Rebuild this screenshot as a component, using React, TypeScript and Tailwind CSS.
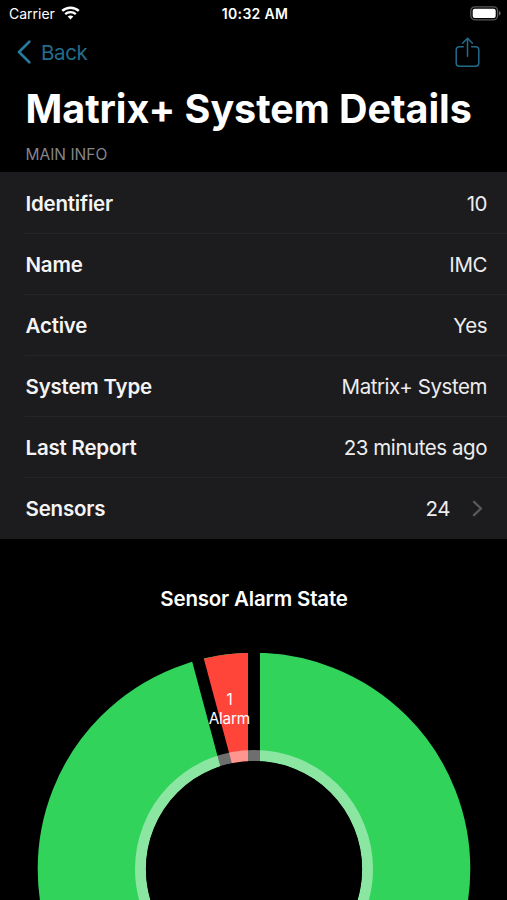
import React from "react";

const rows = [
  { label: "Identifier", value: "10" },
  { label: "Name", value: "IMC" },
  { label: "Active", value: "Yes" },
  { label: "System Type", value: "Matrix+ System" },
  { label: "Last Report", value: "23 minutes ago" },
  { label: "Sensors", value: "24", link: true },
];

function StatusBar() {
  return (
    <div className="grid h-7 grid-cols-3 items-center pr-[6px] pb-px pl-[9px] text-[14px]">
      <div className="flex items-center gap-[6px]">
        <span>Carrier</span>
        <svg className="mb-[2px]" width="19" height="14" viewBox="0 0 19 14" fill="none" stroke="white">
          <path d="M1.200 4.900C5.800.6 13.200.6 17.800 4.900" strokeWidth="2.500" />
          <path d="M4.200 8.100C7.100 5.400 11.900 5.400 14.800 8.100" strokeWidth="2.300" />
          <path d="M6.700 10.500C8.200 9.100 10.800 9.100 12.300 10.500L9.500 13.400Z" fill="white" stroke="none" />
        </svg>
      </div>
      <span className="text-center text-[14px] font-semibold tracking-[0.3px] whitespace-nowrap">10:32 AM</span>
      <svg className="justify-self-end" width="31" height="15" viewBox="0 0 31 15">
        <rect x="0.8" y="0.8" width="26.800" height="13" rx="4" fill="none" stroke="#59595b" strokeWidth="1.300" />
        <rect x="2.700" y="2.700" width="23" height="9.200" rx="2" fill="white" />
        <path d="M29 5v4.600c1-.4 1.600-1.200 1.600-2.300S30 5.400 29 5Z" fill="#68686a" />
      </svg>
    </div>
  );
}

function NavBar() {
  return (
    <div className="flex h-[48px] items-center justify-between pr-[27px] pl-[17px] text-[#236c8c]">
      <div className="flex items-center gap-[10px]">
        <svg width="14" height="24" viewBox="0 0 14 24" fill="none" stroke="#28799a" strokeWidth="2.700" strokeLinecap="round" strokeLinejoin="round">
          <path d="M12.300 1.800 2 12l10.300 10.200" />
        </svg>
        <span className="pt-[2px] text-[20.5px] tracking-[-0.35px]">Back</span>
      </div>
      <svg width="25" height="31" viewBox="0 0 25 31" fill="none" stroke="currentColor" strokeWidth="1.500" strokeLinecap="round" strokeLinejoin="round">
        <path d="M8.300 9.700H4.500Q1.200 9.700 1.200 13v13.100q0 3.200 3.300 3.200h16q3.300 0 3.300-3.200V13q0-3.300-3.300-3.300h-3.800" />
        <path d="M12.500 19.300V1.500M7.600 6.200l4.900-4.900 4.900 4.900" />
      </svg>
    </div>
  );
}

function AlarmChart() {
  return (
    <svg className="mt-[41px] block" width="507" height="247" viewBox="0 653 507 247">
      <circle cx="254" cy="869" r="162.200" fill="none" stroke="#32d35b" strokeWidth="108.200" />
      <path d="M254 869V652.800A216.200 216.200 0 0 0 198.040 660.170Z" fill="#ff453a" />
      <path d="M254 869V645M254 869 196 652.600" stroke="black" strokeWidth="12" />
      <circle cx="254" cy="869" r="113.500" fill="none" stroke="white" strokeOpacity="0.43" strokeWidth="11" />
      <circle cx="254" cy="869" r="108.100" fill="black" />
      <g fill="white" fontSize="15.300" textAnchor="middle">
        <text x="229.500" y="705">1</text>
        <text x="229.300" y="724" letterSpacing="-0.2">Alarm</text>
      </g>
    </svg>
  );
}

export default function App() {
  return (
    <div className="h-[900px] w-[507px] overflow-hidden bg-black font-['Inter','Liberation_Sans',sans-serif] text-white">
      <StatusBar />
      <NavBar />
      <h1 className="mt-[8px] h-[50px] pl-[25.5px] text-[39.5px] leading-[50px] font-bold tracking-[-0.05px] whitespace-nowrap">Matrix+ System Details</h1>
      <div className="flex h-[38px] items-center pt-[3px] pl-[25.5px] text-[15.5px] tracking-[0px] text-[#85858a]">
        MAIN INFO
      </div>
      <div className="h-[367px] bg-[#1c1c1e] text-[20.5px]">
        {rows.map((row, i) => (
          <div key={row.label} className="ml-[25px]">
            {i > 0 && <div className="h-px bg-[#252527]" />}
            <div className={i > 0 ? "flex h-[60px] items-center pr-5" : "flex h-[61px] items-center pt-px pr-5"}>
              <span className="pt-[2px] pl-[0.5px] font-semibold tracking-[-0.2px] text-[#f4f4f5]">{row.label}</span>
              <span className="ml-auto pt-[2px] tracking-[-0.45px] text-[#ededee]">{row.value}</span>
              {row.link && (
                <svg className="mr-[4px] ml-[22px]" width="11" height="17" viewBox="0 0 11 17" fill="none" stroke="#59595d" strokeWidth="2.300" strokeLinecap="round" strokeLinejoin="round">
                  <path d="m2 1.800 7 6.700-7 6.700" />
                </svg>
              )}
            </div>
          </div>
        ))}
      </div>
      <h2 className="mt-[46px] h-[27px] pl-px text-center text-[20.5px] leading-[27px] font-semibold tracking-[-0.18px]">Sensor Alarm State</h2>
      <AlarmChart />
    </div>
  );
}
